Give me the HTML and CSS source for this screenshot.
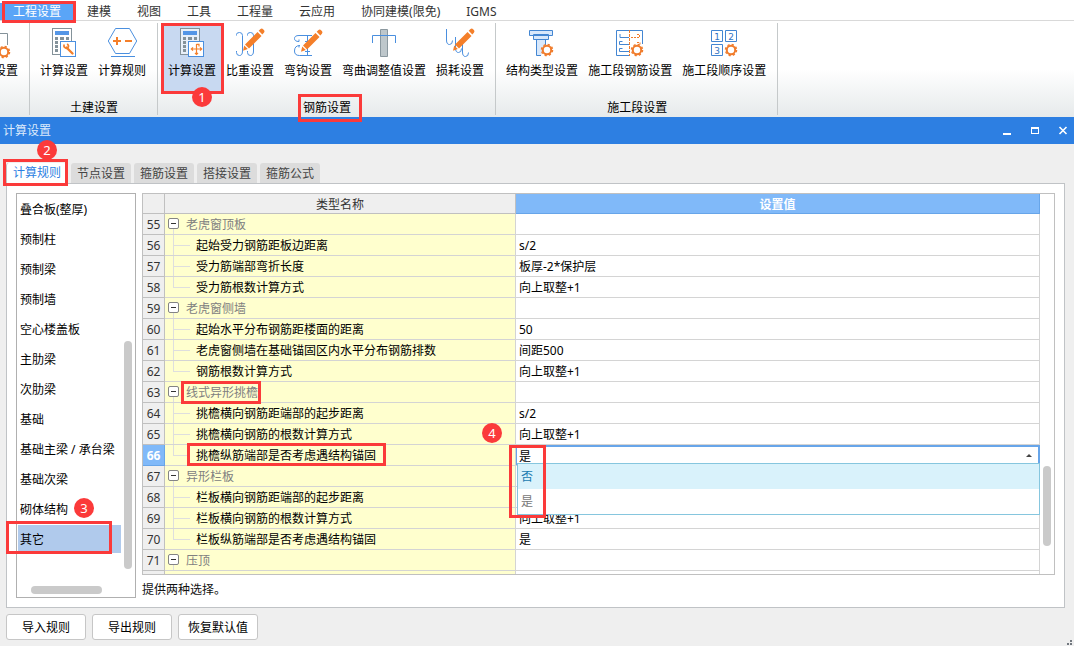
FILE: index.html
```html
<!DOCTYPE html>
<html lang="zh-CN">
<head>
<meta charset="utf-8">
<title>计算设置</title>
<link rel="stylesheet" href="styles.css">
</head>
<body>
<svg class="defs" aria-hidden="true">
  <defs>
    <g id="calc">
      <rect x="5.5" y="3.5" width="19" height="26" fill="#fff" fill-opacity=".6" stroke="#84929a"/>
      <path d="M8 6h14v4H8z" fill="#5596e6"/>
      <path d="M8 12h3v3H8zM13 12h4v3h-4zM19 12h3v3h-3zM8 16h3v3H8zM8 20h3v3H8zM8 24h3v3H8z" fill="#84929a"/>
      <rect x="13.5" y="16.5" width="15" height="15" fill="#fff" stroke="#4a8fdf"/>
    </g>
    <g id="pencil" fill="#f47f2a">
      <path d="M24.5 7l4 4L16 23.5l-4-4zM25.7 5.8l1.8-1.8q1.4-1 2.8.4l.6.6q1.2 1.300 0 2.700L29.300 9.500zM11.200 20.500l3.600 3.600-4.800 1.600z"/>
    </g>
    <g id="gear" fill="none" stroke="#f07c2c">
      <circle r="4.200" stroke-width="2"/>
      <circle r="5.500" stroke-width="1.500" stroke-dasharray="2.200 2.120"/>
    </g>
  </defs>
</svg>

<nav class="menu">
  <a class="menu-item current" href="#">工程设置<span class="mark mark-menu"></span></a>
  <a class="menu-item" href="#">建模</a>
  <a class="menu-item" href="#">视图</a>
  <a class="menu-item" href="#">工具</a>
  <a class="menu-item" href="#">工程量</a>
  <a class="menu-item" href="#">云应用</a>
  <a class="menu-item" href="#">协同建模(限免)</a>
  <a class="menu-item" href="#">IGMS</a>
</nav>

<header class="ribbon">
  <section class="group group-cut">
    <div class="tools">
      <button class="tool" type="button">
        <svg class="icon" viewBox="0 0 34 34"><path d="M6 8.500h12.500V20" fill="none" stroke="#84929a"/><use href="#gear" x="15" y="27"/></svg>
        设置
      </button>
    </div>
  </section>
  <section class="group">
    <div class="tools">
      <button class="tool" type="button">
        <svg class="icon" viewBox="0 0 34 34"><use href="#calc"/><path d="M19.500 22.500l6 6" stroke="#f47f2a" stroke-width="2.400" stroke-linecap="round"/><path d="M17 19.500v2.300q1.800 2.400 4 .8 1.300-2-.8-3.800" fill="none" stroke="#f47f2a" stroke-width="1.700"/></svg>
        计算设置
      </button>
      <button class="tool" type="button">
        <svg class="icon" viewBox="0 0 34 34"><path d="M3.300 16l7.200-12.500h14L31.700 16l-7.200 12.500h-14zM6 31.500h24" fill="none" stroke="#4a8fdf"/><path d="M8 16h8M12 12v8M20 16h7" stroke="#f47f2a" stroke-width="2"/></svg>
        计算规则
      </button>
    </div>
    <h2 class="group-name">土建设置</h2>
  </section>
  <section class="group">
    <div class="tools">
      <button class="tool pressed" type="button">
        <svg class="icon" viewBox="0 0 34 34"><use href="#calc"/><path d="M21.500 19v10M16.500 24h10M18 22.300L16.300 24l1.700 1.700M25 22.300l1.700 1.700-1.700 1.700M20 28l1.500 1.500L23 28M21.500 19.300h2.500v2.200" fill="none" stroke="#f47f2a" stroke-width="1.200"/></svg>
        计算设置
        <span class="mark mark-tool"></span><span class="badge badge-1">1</span>
      </button>
      <button class="tool" type="button">
        <svg class="icon" viewBox="0 0 34 34"><path d="M3.500 10.500V9.500q0-2 3-2t3 3V26q0 4.500-3 4.500t-3-3v-1.500M14.500 10.500V9.500q0-2 3-2t3 3V26q0 4.500-3 4.500t-3-3v-1.500" fill="none" stroke="#4a8fdf"/><use href="#pencil"/></svg>
        比重设置
      </button>
      <button class="tool" type="button">
        <svg class="icon" viewBox="0 0 34 34"><path d="M21 10.500H8q-4.500 0-4.500 3t4.500 3M9 20.500q-5.500 0-5.500 5.500 0 4.500 5 4.500H21M16.500 10.500v20M14 16.500h5M14 26.500h5M8 16.500v-2M8 20.500v2" fill="none" stroke="#4a8fdf"/><use href="#pencil" y="1"/></svg>
        弯钩设置
      </button>
      <button class="tool" type="button">
        <svg class="icon" viewBox="0 0 34 34"><path d="M13.500 4.500h7v27h-7z" fill="#bec7cb" stroke="#8b989f"/><path d="M5.500 18v-7.500h23V18" fill="none" stroke="#4a8fdf"/></svg>
        弯曲调整值设置
      </button>
      <button class="tool" type="button">
        <svg class="icon" viewBox="0 0 34 34"><path d="M3.500 4v11q0 4.500 3 4.500t3-4M12.500 12v11q0 4.500 3 4.500t3-4M19.500 16v11q0 4.500 3 4.500t3-4" fill="none" stroke="#4a8fdf"/><use href="#pencil"/></svg>
        损耗设置
      </button>
    </div>
    <h2 class="group-name"><span class="anchor">钢筋设置<span class="mark mark-group"></span></span></h2>
  </section>
  <section class="group">
    <div class="tools">
      <button class="tool" type="button">
        <svg class="icon" viewBox="0 0 34 34"><path d="M4.500 5.500h23v5h-23zM8.500 9.500h15v5h-15zM16 30.500h-4.500v-16h9V20" fill="#d8e8fb" stroke="#4386d2"/><use href="#gear" x="22" y="25"/></svg>
        结构类型设置
      </button>
      <button class="tool" type="button">
        <svg class="icon" viewBox="0 0 34 34"><path d="M17 30.500H3.500v-25h26V19M7 9v3.500h9M9.500 16.500h-3v3H16M9.500 23.500h-3v3H16" fill="none" stroke="#4386d2"/><path d="M16.500 5v26" stroke="#f07c2c" stroke-dasharray="3 1"/><path d="M18 12.500h8.500v-3H24M24 17.500h3v3" fill="none" stroke="#f07c2c" stroke-dasharray="2 1"/><use href="#gear" x="24" y="25"/></svg>
        施工段钢筋设置
      </button>
      <button class="tool" type="button">
        <svg class="icon" viewBox="0 0 34 34"><path d="M4.500 5.500h11v11h-11zM18.500 5.500h11v11h-11zM4.500 19.500h11v11h-11z" fill="none" stroke="#4386d2"/><g class="digits"><text x="10" y="15">1</text><text x="24" y="15">2</text><text x="10" y="29">3</text></g><use href="#gear" x="24" y="25"/></svg>
        施工段顺序设置
      </button>
    </div>
    <h2 class="group-name">施工段设置</h2>
  </section>
</header>

<main class="dialog">
  <div class="titlebar">
    <h1 class="title">计算设置</h1>
    <div class="controls">
      <button class="control" type="button" aria-label="最小化"><svg viewBox="0 0 14 14"><path d="M3 9h8v2H3z" fill="#fff"/></svg></button>
      <button class="control" type="button" aria-label="最大化"><svg viewBox="0 0 14 14"><path d="M3 3h8v7H3zM4 5v4h6V5z" fill="#fff" fill-rule="evenodd"/></svg></button>
      <button class="control" type="button" aria-label="关闭"><svg viewBox="0 0 14 14"><path d="M3.500 3l7 7M10.500 3l-7 7" stroke="#fff" stroke-width="1.600"/></svg></button>
    </div>
  </div>

  <div class="tabs" role="tablist">
    <button class="tab active" type="button" role="tab" aria-selected="true">计算规则<span class="mark mark-tab"></span><span class="badge badge-2">2</span></button>
    <button class="tab" type="button" role="tab">节点设置</button>
    <button class="tab" type="button" role="tab">箍筋设置</button>
    <button class="tab" type="button" role="tab">搭接设置</button>
    <button class="tab" type="button" role="tab">箍筋公式</button>
  </div>

  <div class="panel">
    <div class="sidebar">
      <ul class="kinds">
        <li class="kind">叠合板(整厚)</li>
        <li class="kind">预制柱</li>
        <li class="kind">预制梁</li>
        <li class="kind">预制墙</li>
        <li class="kind">空心楼盖板</li>
        <li class="kind">主肋梁</li>
        <li class="kind">次肋梁</li>
        <li class="kind">基础</li>
        <li class="kind">基础主梁 / 承台梁</li>
        <li class="kind">基础次梁</li>
        <li class="kind">砌体结构<span class="badge badge-3">3</span></li>
        <li class="kind chosen">其它<span class="mark mark-kind"></span></li>
      </ul>
      <span class="thumb thumb-side"></span>
      <span class="thumb thumb-bottom"></span>
    </div>

    <div class="content">
      <div class="sheet">
        <table class="rules">
          <colgroup><col class="col-no"><col class="col-name"><col></colgroup>
          <thead>
            <tr><th></th><th>类型名称</th><th class="picked">设置值</th></tr>
          </thead>
          <tbody>
            <tr><th>55</th><td class="name"><div class="node parent"><span class="knob"><button class="toggle" type="button" aria-label="折叠"></button></span>老虎窗顶板</div></td><td></td></tr>
            <tr><th>56</th><td class="name"><div class="node"><span class="branch"></span>起始受力钢筋距板边距离</div></td><td>s/2</td></tr>
            <tr><th>57</th><td class="name"><div class="node"><span class="branch"></span>受力筋端部弯折长度</div></td><td>板厚-2*保护层</td></tr>
            <tr><th>58</th><td class="name"><div class="node"><span class="branch last"></span>受力筋根数计算方式</div></td><td>向上取整+1</td></tr>
            <tr><th>59</th><td class="name"><div class="node parent"><span class="knob"><button class="toggle" type="button" aria-label="折叠"></button></span>老虎窗侧墙</div></td><td></td></tr>
            <tr><th>60</th><td class="name"><div class="node"><span class="branch"></span>起始水平分布钢筋距楼面的距离</div></td><td>50</td></tr>
            <tr><th>61</th><td class="name"><div class="node"><span class="branch"></span>老虎窗侧墙在基础锚固区内水平分布钢筋排数</div></td><td>间距500</td></tr>
            <tr><th>62</th><td class="name"><div class="node"><span class="branch last"></span>钢筋根数计算方式</div></td><td>向上取整+1</td></tr>
            <tr><th>63</th><td class="name"><div class="node parent"><span class="knob"><button class="toggle" type="button" aria-label="折叠"></button></span><span class="anchor">线式异形挑檐<span class="mark mark-parent"></span></span></div></td><td></td></tr>
            <tr><th>64</th><td class="name"><div class="node"><span class="branch"></span>挑檐横向钢筋距端部的起步距离</div></td><td>s/2</td></tr>
            <tr><th>65</th><td class="name"><div class="node"><span class="branch"></span>挑檐横向钢筋的根数计算方式</div></td><td>向上取整+1</td></tr>
            <tr><th class="picked">66</th><td class="name"><div class="node"><span class="branch last"></span><label class="anchor" for="anchorage">挑檐纵筋端部是否考虑遇结构锚固<span class="mark mark-rule"></span></label></div></td>
              <td class="editing">
                <div class="combo">
                  <select class="combo-field" id="anchorage"><option>否</option><option selected>是</option></select>
                  <svg class="arrow" viewBox="0 0 6 4" aria-hidden="true"><path d="M3 0l3 3H0z" fill="#444"/></svg>
                  <ul class="options"><li class="option hot">否</li><li class="option">是</li></ul>
                  <span class="mark mark-combo"></span><span class="badge badge-4">4</span>
                </div>
              </td></tr>
            <tr><th>67</th><td class="name"><div class="node parent"><span class="knob"><button class="toggle" type="button" aria-label="折叠"></button></span>异形栏板</div></td><td></td></tr>
            <tr><th>68</th><td class="name"><div class="node"><span class="branch"></span>栏板横向钢筋距端部的起步距离</div></td><td></td></tr>
            <tr><th>69</th><td class="name"><div class="node"><span class="branch"></span>栏板横向钢筋的根数计算方式</div></td><td>向上取整+1</td></tr>
            <tr><th>70</th><td class="name"><div class="node"><span class="branch last"></span>栏板纵筋端部是否考虑遇结构锚固</div></td><td>是</td></tr>
            <tr><th>71</th><td class="name"><div class="node parent"><span class="knob"><button class="toggle" type="button" aria-label="折叠"></button></span>压顶</div></td><td></td></tr>
            <tr class="rest"><th></th><td class="name"></td><td></td></tr>
          </tbody>
        </table>
        <div class="gutter"><span class="thumb thumb-sheet"></span></div>
      </div>
      <p class="hint">提供两种选择。</p>
    </div>
  </div>

  <footer class="actions">
    <button class="action" type="button">导入规则</button>
    <button class="action" type="button">导出规则</button>
    <button class="action" type="button">恢复默认值</button>
  </footer>
  <svg class="grip" viewBox="0 0 6 6" aria-hidden="true"><path d="M3 0h2v2H3zM0 3h2v2H0zM3 3h2v2H3z" fill="#72787f"/></svg>
</main>
</body>
</html>
```
FILE: styles.css
```css
* { box-sizing: border-box; }

body {
  margin: 0;
  min-height: 100vh;
  display: flex;
  flex-direction: column;
  background: #fff;
  color: #000;
  font: 12px/16px "Noto Sans", "Noto Sans CJK SC", sans-serif;
}

button, select {
  font: inherit;
  color: inherit;
  margin: 0;
  padding: 0;
  border: 0;
  background: none;
}

h1, h2, p, ul { margin: 0; padding: 0; font-size: 12px; font-weight: 400; list-style: none; }

.defs { position: absolute; width: 0; height: 0; }

/* Callouts */
.anchor { position: relative; }
.mark { position: absolute; z-index: 5; border: 3px solid #fb3a3a; pointer-events: none; }
.badge {
  position: absolute;
  z-index: 6;
  width: 20px;
  height: 20px;
  border-radius: 50%;
  background: #fb3a3a;
  color: #fff;
  font-size: 13px;
  line-height: 20px;
  text-align: center;
}
.mark-menu { inset: 1px -2px -3px 2px; }
.mark-tool { inset: -1px -3px -3px -2px; }
.mark-group { inset: -5px -11px -6px -5px; }
.mark-tab { inset: -4px -2px -2px -4px; }
.mark-kind { inset: -4px 9px -1px -12px; }
.mark-parent { inset: -1px -3px 0 -5px; }
.mark-rule { inset: -2px -10px 1px -9px; }
.mark-combo { top: 0; left: -7px; width: 37px; height: 73px; }
.badge-1 { left: 29px; top: 63px; }
.badge-2 { left: 30px; top: -23px; }
.badge-3 { left: 56px; top: 3px; }
.badge-4 { left: -34px; top: -22px; }

/* Menu */
.menu { display: flex; height: 21px; border-bottom: 1px solid #d9d9d9; }
.menu-item {
  position: relative;
  padding: 4px 13px 0;
  color: #333;
  text-decoration: none;
}
.menu-item.current {
  color: #fff;
  background: linear-gradient(#fff 3px, #5aa5f7 3px);
}

/* Ribbon */
.ribbon {
  display: flex;
  padding: 2px 0;
  background: linear-gradient(#fff 50%, #e6eaeb);
}
.group {
  display: flex;
  flex-direction: column;
  padding: 1px 6px 0 5px;
  border-right: 1px solid #c5c9ca;
}
.group-cut { width: 30px; align-items: flex-end; overflow: hidden; padding-right: 1px; }
.tools { display: flex; }
.tool {
  position: relative;
  display: flex;
  flex-direction: column;
  align-items: center;
  gap: 4px;
  padding: 1px 5px 12px;
  white-space: nowrap;
}
.tool.pressed { background: #c8d9f1; }
.icon { width: 34px; height: 34px; }
.digits { font: 9px "DejaVu Sans", sans-serif; fill: #3274c4; text-anchor: middle; }
.group-name { margin-top: 8px; padding-top: 1px; height: 16px; padding-left: 2px; text-align: center; }

/* Dialog */
.dialog {
  position: relative;
  flex: 1;
  display: flex;
  flex-direction: column;
  background: #efefef;
}
.titlebar {
  display: flex;
  align-items: center;
  justify-content: space-between;
  height: 27px;
  padding: 0 4px 0 3px;
  background: #2d7fe2;
  color: #dceafc;
}
.controls { display: flex; gap: 14px; }
.control { width: 14px; height: 14px; }
.control svg { display: block; }

.tabs { display: flex; gap: 3px; margin: 19px 6px 0; }
.tab {
  position: relative;
  height: 20px;
  padding: 2px 6px 0;
  border-radius: 3px 3px 0 0;
  background: #dcdcdc;
  color: #444;
}
.tab.active {
  z-index: 1;
  height: 21px;
  margin: 0 2px -1px 0;
  border: solid #c0c3c6;
  border-width: 0 0 0 1px;
  padding: 0 5px 2px 6px;
  background: #fff;
  color: #2d7fe2;
}

.panel {
  flex: 1;
  display: flex;
  gap: 6px;
  margin: 0 9px 0 6px;
  padding: 9px;
  border: 1px solid #c0c3c6;
  background: #fff;
}

/* Component list */
.sidebar { position: relative; width: 120px; border: 1px solid #b0b0b0; }
.kinds { padding: 1px 14px 0 1px; }
.kind { position: relative; height: 30px; padding-left: 2px; line-height: 30px; white-space: nowrap; }
.kind.chosen { height: 28px; background: #b0caec; }
.thumb { position: absolute; border-radius: 4px; background: #cacaca; }
.thumb-side { right: 3px; top: 147px; width: 8px; height: 228px; }
.thumb-bottom { left: 14px; bottom: 3px; width: 71px; height: 8px; }

/* Rules sheet */
.content { flex: 1; display: flex; flex-direction: column; gap: 7px; }
.sheet { flex: 1; display: flex; border: 1px solid #c0c0c0; }
.rules {
  flex: 1;
  align-self: flex-start;
  table-layout: fixed;
  border-spacing: 0;
}
.col-no { width: 22px; }
.col-name { width: 351px; }
.rules th, .rules td {
  height: 21px;
  padding: 2px 0 0;
  border: solid #d4d4d4;
  border-width: 0 1px 1px 0;
  font-weight: 400;
}
.rules th { background: #efefef; color: #333; border-color: #c0c0c0; }
.rules thead th { height: 20px; }
.rules td { padding-left: 3px; }
.rules td.name { padding: 0; background: #ffffce; }
.rules .picked {
  background: #80b9f9;
  border-color: #67a5e9;
  color: #fff;
  font-weight: 700;
}
.rules .rest th, .rules .rest td { height: 3px; border-bottom: 0; }
.node { display: flex; align-items: flex-start; height: 20px; line-height: 22px; }
.node.parent { color: #808080; }
.knob {
  width: 21px;
  height: 20px;
  padding: 4px 0 0 3px;
  background: linear-gradient(#dedede, #dedede) 8px 15px / 1px 5px no-repeat;
}
.toggle {
  display: block;
  width: 11px;
  height: 11px;
  border: 1px solid #848484;
  border-radius: 2px;
  background: linear-gradient(#333, #333) center / 5px 1px no-repeat #fff;
}
.branch {
  width: 17px;
  height: 20px;
  margin: 0 6px 0 8px;
  background:
    linear-gradient(#dedede, #dedede) 0 0 / 1px 20px no-repeat,
    linear-gradient(#dedede, #dedede) 0 10px / 17px 1px no-repeat;
}
.branch.last {
  background-size: 1px 10px, 17px 1px;
}

/* Open drop-down in a cell */
.rules td.editing { padding: 0; }
.combo { position: relative; height: 20px; margin-right: -1px; }
.combo-field {
  display: block;
  width: 100%;
  height: 20px;
  padding: 2px 0 0 2px;
  border: solid #67a5e9;
  border-width: 2px 2px 0 1px;
  background: #fff;
  appearance: none;
}
.arrow { position: absolute; right: 8px; top: 9px; width: 6px; height: 4px; }
.options {
  position: absolute;
  z-index: 2;
  top: 18px;
  left: 1px;
  right: 0;
  border: 1px solid #86c6de;
  background: #fff;
  color: #777;
}
.option { height: 25px; padding-left: 3px; line-height: 25px; }
.option.hot { background: #d9f2fb; color: #1a7bb0; }

.gutter { position: relative; width: 14px; }
.thumb-sheet { right: 3px; top: 272px; width: 8px; height: 80px; }
.hint { color: #111; }

/* Footer */
.actions { display: flex; gap: 6px; padding: 6px; }
.action {
  min-width: 80px;
  height: 26px;
  padding-top: 2px;
  border: 1px solid #c6c6c6;
  border-radius: 3px;
  background: #fff;
}
.grip { position: absolute; right: 1px; bottom: 0; width: 6px; height: 6px; }
```
